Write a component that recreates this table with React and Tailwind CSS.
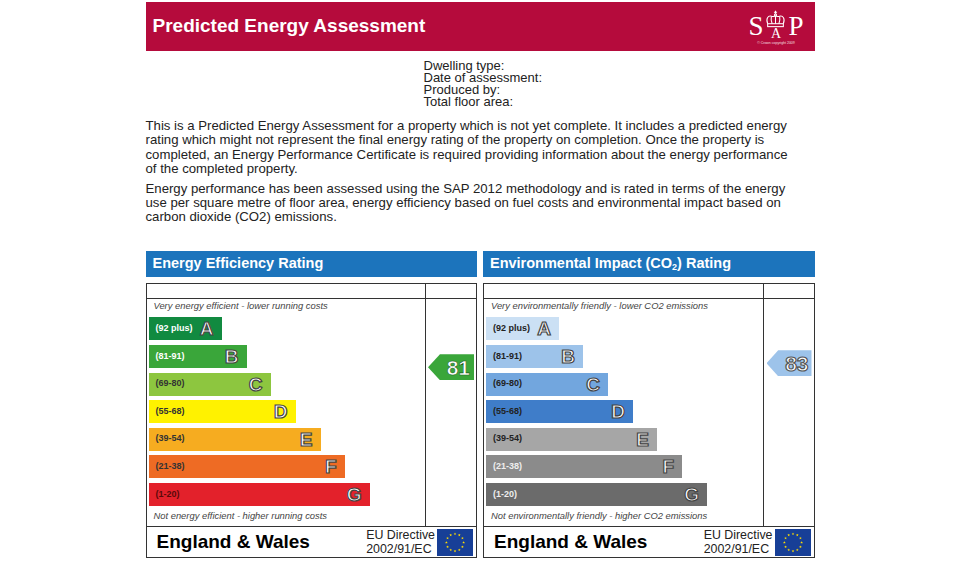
import React from "react";

const eeBands = [
  { range: "(92 plus)", letter: "A", w: "w-[73px]", bg: "bg-[#118a40]", fg: "text-white" },
  { range: "(81-91)", letter: "B", w: "w-[98px]", bg: "bg-[#3aa63a]", fg: "text-white" },
  { range: "(69-80)", letter: "C", w: "w-[122px]", bg: "bg-[#8dc63f]", fg: "text-[#333]" },
  { range: "(55-68)", letter: "D", w: "w-[147px]", bg: "bg-[#fff200]", fg: "text-[#333]" },
  { range: "(39-54)", letter: "E", w: "w-[172px]", bg: "bg-[#f6ac20]", fg: "text-[#333]" },
  { range: "(21-38)", letter: "F", w: "w-[196px]", bg: "bg-[#ee6b24]", fg: "text-[#333]" },
  { range: "(1-20)", letter: "G", w: "w-[221px]", bg: "bg-[#e3212b]", fg: "text-[#5a0a0a]" },
];

const eiBands = [
  { range: "(92 plus)", letter: "A", w: "w-[73px]", bg: "bg-[#cbe0f4]", fg: "text-[#222]" },
  { range: "(81-91)", letter: "B", w: "w-[97px]", bg: "bg-[#9dc3ea]", fg: "text-[#222]" },
  { range: "(69-80)", letter: "C", w: "w-[122px]", bg: "bg-[#72a6de]", fg: "text-[#222]" },
  { range: "(55-68)", letter: "D", w: "w-[147px]", bg: "bg-[#3f7dc9]", fg: "text-[#222]" },
  { range: "(39-54)", letter: "E", w: "w-[171px]", bg: "bg-[#a6a6a6]", fg: "text-[#222]" },
  { range: "(21-38)", letter: "F", w: "w-[196px]", bg: "bg-[#8b8b8b]", fg: "text-[#eee]" },
  { range: "(1-20)", letter: "G", w: "w-[221px]", bg: "bg-[#6b6b6b]", fg: "text-[#eee]" },
];

function EuFlag() {
  const stars = Array.from({ length: 12 }, (_, i) => {
    const a = (i / 12) * Math.PI * 2;
    const cx = 18 + Math.sin(a) * 8.6;
    const cy = 13.5 - Math.cos(a) * 8.6;
    const pts = [];
    for (let k = 0; k < 10; k++) {
      const r = k % 2 === 0 ? 1.4 : 0.6;
      const t = (k / 10) * Math.PI * 2;
      pts.push(`${(cx + Math.sin(t) * r).toFixed(2)},${(cy - Math.cos(t) * r).toFixed(2)}`);
    }
    return <polygon key={i} points={pts.join(" ")} fill="#ffdd00" />;
  });
  return (
    <svg viewBox="0 0 36 27" className="h-[27px] w-[36px] shrink-0" aria-hidden>
      <rect width="36" height="27" fill="#173f97" />
      {stars}
    </svg>
  );
}

function Crown() {
  return (
    <svg viewBox="0 0 22 17" className="h-[18px] w-[23px]" fill="none" stroke="white" strokeWidth="1" aria-hidden>
      <path d="M11 0.5v3M9.5 2h3" />
      <circle cx="11" cy="4.6" r="1" />
      <path d="M3.5 13C1.5 8 4 5 7 5.8C9 6.3 10 6 11 5.6C12 6 13 6.3 15 5.8C18 5 20.5 8 18.5 13" />
      <path d="M7 6.2C6.5 8.5 7 11 7.8 13M15 6.2C15.5 8.5 15 11 14.2 13M11 5.6V13" />
      <rect x="3.5" y="13" width="15" height="2.8" />
    </svg>
  );
}

function SapLogo() {
  return (
    <div className="flex flex-col items-center pt-[2px]">
      <div className="flex items-end font-['Liberation_Serif',serif] leading-none text-white">
        <span className="text-[27px]">S</span>
        <div className="mx-[1px] flex flex-col items-center">
          <Crown />
          <span className="text-[14px] leading-[12px]">A</span>
        </div>
        <span className="text-[27px]">P</span>
      </div>
      <div className="mt-[2px] text-[3.5px] leading-none text-white/80">© Crown copyright 2009</div>
    </div>
  );
}

function Chart({ title, topNote, bottomNote, bands, arrow }) {
  return (
    <div className="flex flex-col">
      <div className="flex h-[26px] items-center bg-[#1c74bc] pl-[7px] text-[14.5px] font-bold text-white">
        {title}
      </div>
      <div className="mt-[6px] flex h-[275.5px] flex-col border-[1.5px] border-[#333]">
        <div className="flex flex-1">
          <div className="flex flex-1 flex-col">
            <div className="h-[15.5px] border-b-[1.5px] border-[#333]" />
            <div className="flex flex-1 flex-col pl-[2px] pt-[2px]">
              <div className="pl-[5px] text-[9.4px] italic leading-[10px] text-[#444]">{topNote}</div>
              <div className="mt-[6px] flex flex-col gap-[4.6px]">
                {bands.map((b) => (
                  <div
                    key={b.letter}
                    className={`flex h-[23px] items-center justify-between pl-[7px] pr-[8px] ${b.w} ${b.bg}`}
                  >
                    <span className={`text-[9px] font-bold ${b.fg}`}>{b.range}</span>
                    <span className="text-[19px] font-bold leading-none text-white [-webkit-text-stroke:1.2px_#444]">
                      {b.letter}
                    </span>
                  </div>
                ))}
              </div>
              <div className="mt-[5.4px] pl-[5px] text-[9.4px] italic leading-[10px] text-[#444]">{bottomNote}</div>
            </div>
          </div>
          <div className="flex w-[51px] flex-col border-l-[1.5px] border-[#333]">
            <div className="h-[15.5px] border-b-[1.5px] border-[#333]" />
            {arrow}
          </div>
        </div>
        <div className="flex h-[31.5px] items-center justify-between border-t-[1.5px] border-[#333] pl-[10px] pr-[3px]">
          <span className="text-[19px] font-bold text-black">England &amp; Wales</span>
          <div className="flex items-center gap-[2px]">
            <div className="text-[12.4px] leading-[14px] text-[#222]">
              <div>EU Directive</div>
              <div>2002/91/EC</div>
            </div>
            <EuFlag />
          </div>
        </div>
      </div>
    </div>
  );
}

export default function App() {
  return (
    <div className="h-[580px] w-[960px] overflow-hidden bg-white font-['Liberation_Sans',Arial,sans-serif]">
      <div className="mx-auto w-[669px] pt-[2px]">
        <div className="flex h-[49px] items-center justify-between bg-[#b50b3c] pl-[7px] pr-[11px]">
          <h1 className="text-[19px] font-bold text-white">Predicted Energy Assessment</h1>
          <SapLogo />
        </div>

        <div className="mt-[9px] pl-[278px] text-[13px] leading-[12px] text-[#222]">
          <div>Dwelling type:</div>
          <div>Date of assessment:</div>
          <div>Produced by:</div>
          <div>Total floor area:</div>
        </div>

        <p className="mt-[11px] whitespace-nowrap text-[13.2px] leading-[14.4px] text-[#222]">
          This is a Predicted Energy Assessment for a property which is not yet complete. It includes a predicted energy
          <br />
          rating which might not represent the final energy rating of the property on completion. Once the property is
          <br />
          completed, an Energy Performance Certificate is required providing information about the energy performance
          <br />
          of the completed property.
        </p>
        <p className="mt-[5px] whitespace-nowrap text-[13.2px] leading-[14.4px] text-[#222]">
          Energy performance has been assessed using the SAP 2012 methodology and is rated in terms of the energy
          <br />
          use per square metre of floor area, energy efficiency based on fuel costs and environmental impact based on
          <br />
          carbon dioxide (CO2) emissions.
        </p>

        <div className="mt-[26px] grid grid-cols-2 gap-[6px]">
          <Chart
            title="Energy Efficiency Rating"
            topNote="Very energy efficient - lower running costs"
            bottomNote="Not energy efficient - higher running costs"
            bands={eeBands}
            arrow={
              <div className="ml-[2px] mt-[55px] flex h-[26px] w-[46px] items-center justify-end bg-[#3aa63a] pr-[4px] [clip-path:polygon(0_50%,26%_0,100%_0,100%_100%,26%_100%)]">
                <span className="text-[21px] font-bold leading-none text-white [-webkit-text-stroke:0.6px_#1f5f1f]">81</span>
              </div>
            }
          />
          <Chart
            title={
              <span>
                Environmental Impact (CO<sub className="text-[9px]">2</sub>) Rating
              </span>
            }
            topNote="Very environmentally friendly - lower CO2 emissions"
            bottomNote="Not environmentally friendly - higher CO2 emissions"
            bands={eiBands}
            arrow={
              <div className="ml-[3px] mt-[51px] flex h-[26px] w-[45px] items-center justify-end bg-[#9dc3ea] pr-[3px] [clip-path:polygon(0_50%,26%_0,100%_0,100%_100%,26%_100%)]">
                <span className="text-[21px] font-bold leading-none text-white [-webkit-text-stroke:1.2px_#555]">83</span>
              </div>
            }
          />
        </div>
      </div>
    </div>
  );
}
